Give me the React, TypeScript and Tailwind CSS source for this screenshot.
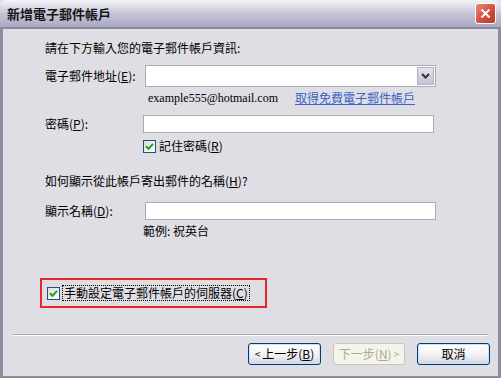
import React from 'react';

const cjk = "font-['Noto_Sans_CJK_TC','Noto_Sans_CJK_SC',sans-serif]";

function Key({ k }: { k: string }) {
    return (
        <span>
            (<span className="underline">{k}</span>)
        </span>
    );
}

function Check({ checked = true }: { checked?: boolean }) {
    return (
        <span className="w-[13px] h-[13px] border border-[#1c5180] bg-gradient-to-br from-[#dcdcd7] to-white flex items-center justify-center shrink-0">
            {checked && (
                <svg width="9" height="9" viewBox="0 0 9 9">
                    <path d="M1 4.2 L3.5 6.8 L8 1.8" stroke="#21a121" strokeWidth="2" fill="none" />
                </svg>
            )}
        </span>
    );
}

function Field({ w, combo = false }: { w: number; combo?: boolean }) {
    return (
        <div
            className="h-full bg-white border border-[#a5acb5] flex justify-end items-stretch"
            style={{ width: w }}
        >
            {combo && (
                <div className="w-[17px] m-[1px] bg-gradient-to-b from-[#e4e4ec] to-[#c2c2d2] border border-[#b2b2c4] flex items-center justify-center">
                    <svg width="9" height="6" viewBox="0 0 9 6">
                        <path d="M1 1 L4.5 4.5 L8 1" stroke="#303040" strokeWidth="2" fill="none" />
                    </svg>
                </div>
            )}
        </div>
    );
}

function Btn({ children, disabled = false }: { children: React.ReactNode; disabled?: boolean }) {
    return (
        <div
            className={
                disabled
                    ? 'w-[72px] h-[22px] rounded-[3px] border border-[#c9c7ba] bg-[#f5f4ea] text-[#aca899] flex items-center justify-center'
                    : 'w-[73px] h-[22px] rounded-[3px] border border-[#003c74] bg-gradient-to-b from-white via-[#f3f3f7] to-[#d6d5e0] text-black flex items-center justify-center shadow-[inset_0_0_0_1px_#cde0f6]'
            }
        >
            {children}
        </div>
    );
}

export default function App() {
    return (
        <div className={`w-[501px] h-[378px] bg-[#dfdee4] text-[12px] leading-[16px] text-black flex flex-col ${cjk}`}>
            {/* Title bar */}
            <div className="h-[29px] shrink-0 rounded-t-[6px] bg-gradient-to-b from-[#f4f4f8] via-[#c6c5d7] to-[#a9a8c0] border-b-2 border-[#8a8aa0] flex items-center justify-between pl-[7px] pr-[5px]">
                <span className="font-bold text-[13px] text-[#161616]">新增電子郵件帳戶</span>
                <div className="w-[21px] h-[21px] rounded-[3px] border border-white bg-gradient-to-br from-[#e8897a] via-[#d6523e] to-[#b8382a] flex items-center justify-center">
                    <svg width="11" height="11" viewBox="0 0 11 11">
                        <path d="M1.5 1.5 L9.5 9.5 M9.5 1.5 L1.5 9.5" stroke="white" strokeWidth="2" />
                    </svg>
                </div>
            </div>

            {/* Body */}
            <div className="flex-1 flex flex-col border-l-[3px] border-r-[3px] border-b-[2px] border-[#8d8ca0]">
                <div className="mt-[11px] h-[16px] pl-[42px]">請在下方輸入您的電子郵件帳戶資訊:</div>

                <div className="mt-[9px] h-[22px] flex items-center pl-[42px]">
                    <span className="w-[100px]">電子郵件地址<Key k="E" />:</span>
                    <Field w={291} combo />
                </div>

                <div className="mt-[3px] h-[16px] flex items-center pl-[145px]">
                    <span className="font-['Liberation_Serif',serif] w-[147px]">example555@hotmail.com</span>
                    <span className="text-[#3b62c4] underline">取得免費電子郵件帳戶</span>
                </div>

                <div className="mt-[9px] h-[18px] flex items-center pl-[42px]">
                    <span className="w-[98px]">密碼<Key k="P" />:</span>
                    <Field w={291} />
                </div>

                <div className="mt-[6px] h-[14px] flex items-center gap-[3px] pl-[140px]">
                    <Check />
                    <span>記住密碼<Key k="R" /></span>
                </div>

                <div className="mt-[20px] h-[16px] pl-[42px]">
                    如何顯示從此帳戶寄出郵件的名稱<Key k="H" />?
                </div>

                <div className="mt-[13px] h-[18px] flex items-center pl-[42px]">
                    <span className="w-[100px]">顯示名稱<Key k="D" />:</span>
                    <Field w={291} />
                </div>

                <div className="mt-[3px] h-[16px] pl-[140px]">範例: 祝英台</div>

                <div className="mt-[39px] ml-[37px] w-[227px] h-[30px] border-2 border-[#e8262a] flex items-center gap-[2px] pl-[5px]">
                    <Check />
                    <span className="border border-dotted border-black px-[1px] leading-[14px]">
                        手動設定電子郵件帳戶的伺服器<Key k="C" />
                    </span>
                </div>

                <div className="mt-[26px] mx-[10px] h-[2px] border-t border-[#a9a8b8] border-b border-b-white" />

                <div className="mt-[7px] flex justify-end gap-[12px] pr-[8px]">
                    <Btn>
                        <span className="text-[10px] mr-[2px]">&lt;</span>上一步<Key k="B" />
                    </Btn>
                    <Btn disabled>
                        下一步<Key k="N" />
                        <span className="text-[10px] ml-[2px]">&gt;</span>
                    </Btn>
                    <Btn>取消</Btn>
                </div>
            </div>
        </div>
    );
}
